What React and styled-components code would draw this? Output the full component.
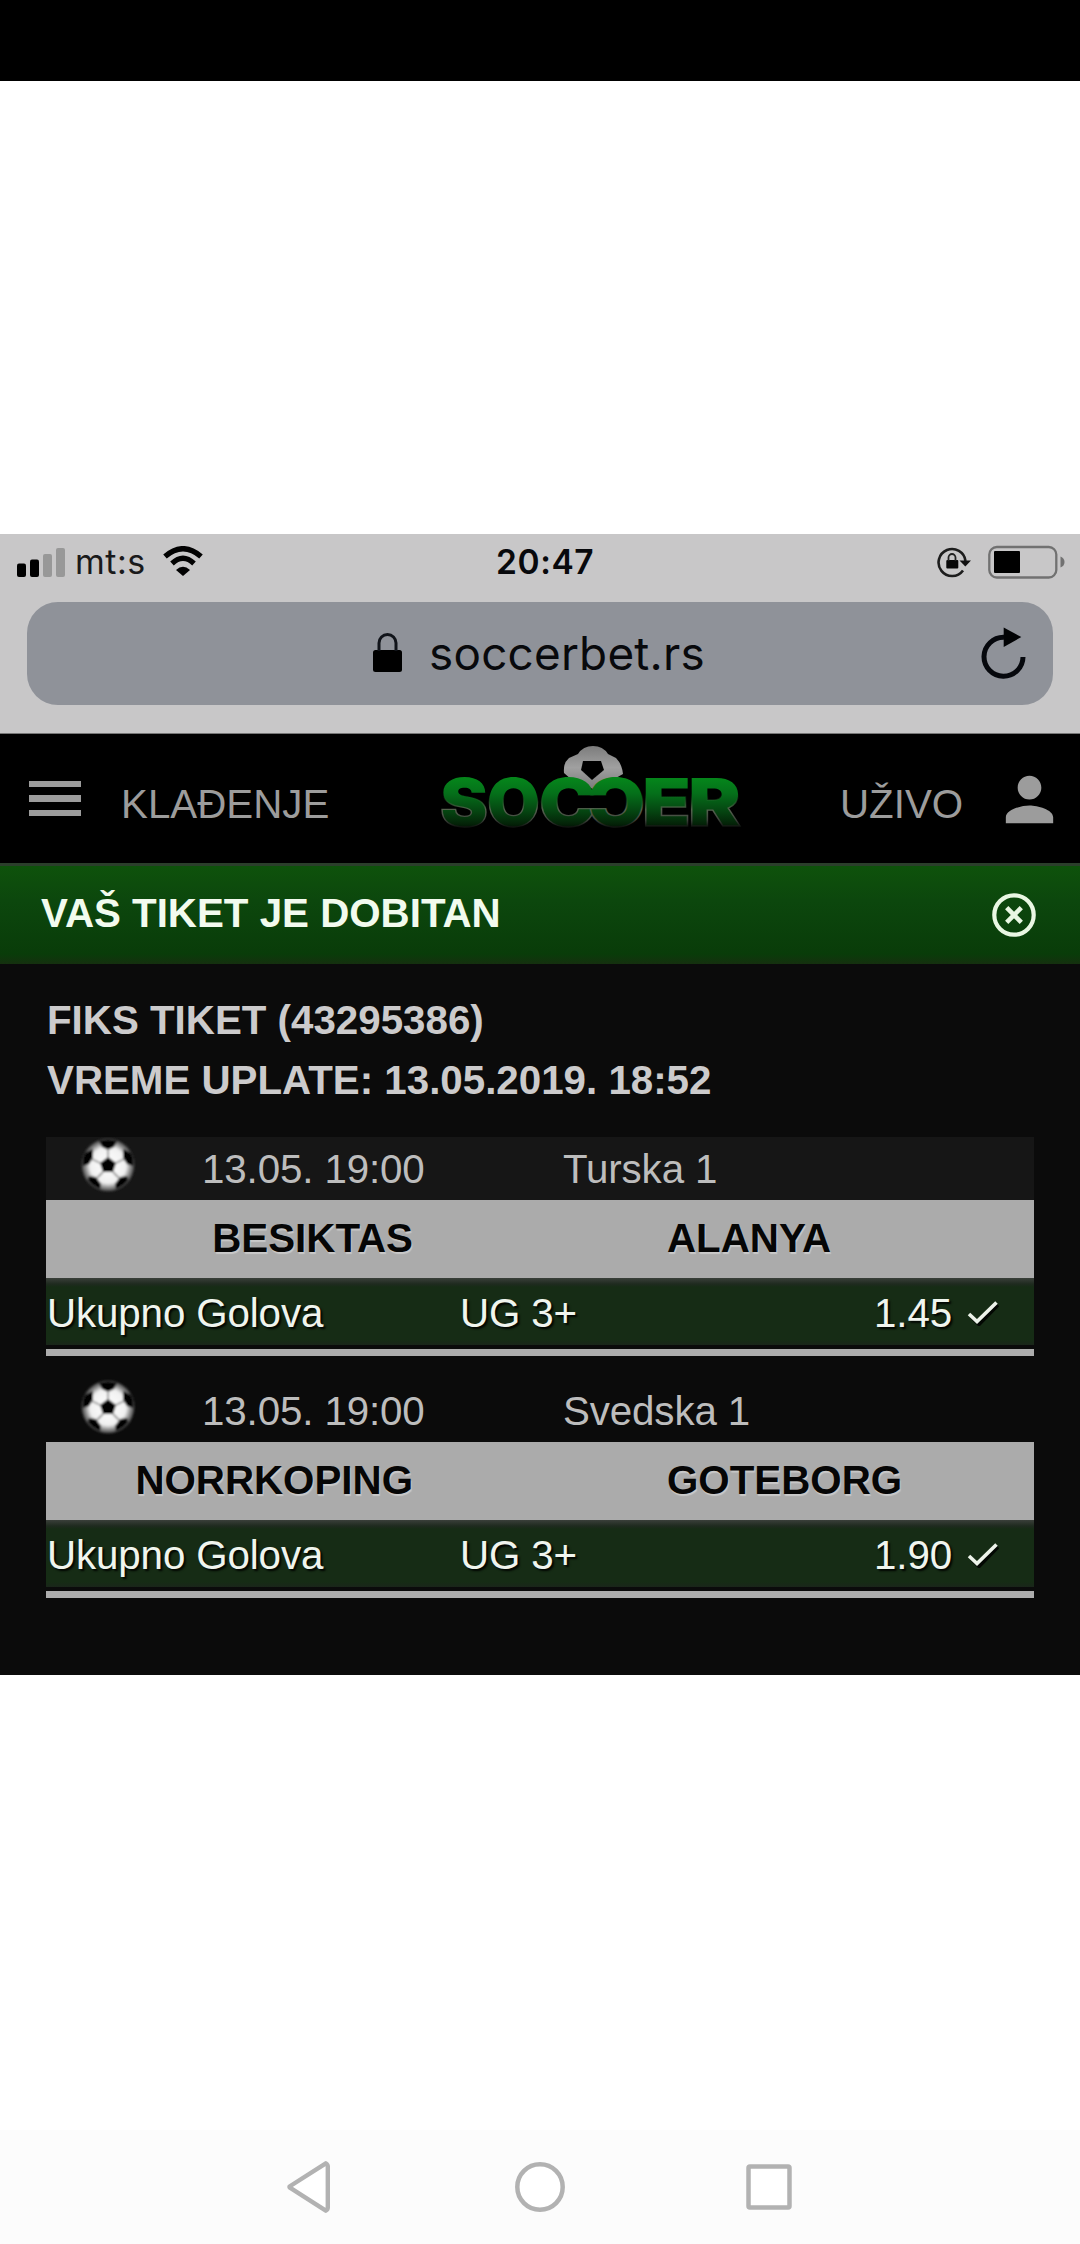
import React from "react";
import styled, { createGlobalStyle } from "styled-components";

const Global = createGlobalStyle`
  html, body { margin: 0; padding: 0; background: #fff; }
  svg { display: block; }
`;

const Page = styled.div`
  width: 1080px;
  height: 2244px;
  display: flex;
  flex-direction: column;
  overflow: hidden;
  background: #fff;
  font-family: "Liberation Sans", Arial, sans-serif;
  font-size: 40.3px;
  line-height: 60px;
  white-space: nowrap;
`;
const TopStrip = styled.div`
  height: 81px;
  flex: none;
  background: #000;
`;
const Shot = styled.main`
  margin-top: 453px;
  height: 1140.5px;
  flex: none;
  display: flex;
  flex-direction: column;
  background: #0b0b0b;
`;
const Browser = styled.section`
  height: 199.5px;
  flex: none;
  box-sizing: border-box;
  background: #c8c7c8;
  border-bottom: 1px solid #777;
  font-family: Inter, sans-serif;
  color: #08090c;
`;
const StatusBar = styled.div`
  height: 67.5px;
  box-sizing: border-box;
  padding-bottom: 12px;
  line-height: 54px;
  display: grid;
  grid-template-columns: 75px 88px 333px 436px 1fr;
  align-items: center;
`;
const Carrier = styled.span`
  font-size: 34px;
  letter-spacing: 0.5px;
  color: #1a1a1b;
`;
const Clock = styled.span`
  font-size: 33.5px;
  font-weight: 600;
  letter-spacing: 0.6px;
`;
const IconSlot = styled.div`
  padding-left: ${(p) => p.$left || 0}px;
  padding-top: ${(p) => p.$above || 0}px;
  padding-bottom: ${(p) => p.$bottom || 0}px;
  display: flex;
`;
const Address = styled.div`
  margin: 0 27px;
  height: 103.5px;
  display: grid;
  grid-template-columns: 346px 56px 1fr 79px;
  align-items: center;
  border-radius: 31px;
  background: #8f9299;
`;
const Host = styled.span`
  font-size: 45.8px;
  letter-spacing: 0.25px;
  padding-top: 2px;
`;
const SiteNav = styled.nav`
  height: 129.5px;
  flex: none;
  display: grid;
  grid-template-columns: 29px 92px 319px 400px 154px 1fr;
  background: #000;
  color: #9c9c9c;
`;
const Burger = styled.div`
  grid-column: 2;
  width: 52px;
  padding-top: 47.5px;
  display: flex;
  flex-direction: column;
  gap: 8px;
`;
const Bar = styled.i`
  height: 6.3px;
  background: #9c9c9c;
`;
const NavLink = styled.span`
  padding-top: 41.5px;
`;
const Logo = styled.svg`
  width: 310px;
  height: 100px;
  margin-top: 8px;
`;
const UserSlot = styled.div`
  padding-top: 30px;
`;
const Banner = styled.header`
  height: 100.5px;
  flex: none;
  box-sizing: border-box;
  border-top: 3px solid #2b3f2b;
  padding: 0 43px 0 41px;
  display: flex;
  align-items: center;
  justify-content: space-between;
  background: linear-gradient(#0e520b, #0c470d 35%, #093c09 90%, #15300f);
  color: #f2fbee;
  font-weight: 700;
`;
const BannerTitle = styled.span`
  padding-bottom: 2px;
`;
const Ticket = styled.section`
  padding: 27px 46px 0 46px;
`;
const Info = styled.p`
  margin: 0;
  padding-left: 1px;
  height: 60px;
  font-weight: 700;
  color: #cccbcc;
`;
const Match = styled.article`
  margin-top: ${(p) => p.$top}px;
`;
const MatchHead = styled.div`
  height: 63px;
  display: grid;
  grid-template-columns: 156px 361px 1fr;
  align-items: center;
  background: ${(p) => (p.$shade ? "#161616" : "transparent")};
  color: #bdbdbd;
`;
const Cell = styled.span`
  padding-top: 3px;
  letter-spacing: -0.12px;
`;
const Teams = styled.div`
  height: 78px;
  display: grid;
  grid-template-columns: 367px 254px 1fr;
  align-items: center;
  background: #ababab;
  color: #060606;
  font-weight: 700;
  text-shadow: 1px 2px 1px #c9c9c9;
`;
const Team = styled.span`
  grid-column: ${(p) => (p.$away ? 3 : 1)};
  text-align: ${(p) => (p.$away ? "left" : "right")};
`;
const Bet = styled.div`
  height: 67px;
  box-sizing: border-box;
  padding: 2px 0 0 1px;
  display: grid;
  grid-template-columns: 413px 1fr auto 82px;
  align-items: center;
  background: linear-gradient(#3a3f3a, #1f2a1f 6px, #162c15 9px, #162c15 62px, #1a261a);
  color: #f0f5ee;
  text-shadow: 2px 2px 2px #020602;
`;
const Rule = styled.div`
  height: 6.5px;
  margin-top: 4.5px;
  background: #adadad;
`;
const AndroidNav = styled.footer`
  margin-top: auto;
  height: 114px;
  display: grid;
  grid-template-columns: 425px 230px 1fr;
  align-items: center;
  background: #fcfcfc;
`;

const BallIcon = () => (
  <svg width="56" height="56" viewBox="-28 -28 56 56">
    <defs>
      <radialGradient id="ballShade">
        <stop offset="0" stopColor="#fff" />
        <stop offset="0.68" stopColor="#f0f0f0" />
        <stop offset="0.86" stopColor="#8a8a8a" />
        <stop offset="1" stopColor="#3c3c3c" />
      </radialGradient>
      <filter id="ballSoft"><feGaussianBlur stdDeviation="0.9" /></filter>
    </defs>
    <g filter="url(#ballSoft)">
      <circle r="26.5" fill="url(#ballShade)" />
      <g fill="#050505">
        <path d="M0-8 8-2 5 7H-5L-8-2Z" />
        <path d="M-9-24Q0-27 9-24L6-18 0-15-6-18Z" />
        <path d="M-23-12-15-16-15-7-19-1-25 1Q-26-6-23-12Z" />
        <path d="M23-12 15-16 15-7 19-1 25 1Q26-6 23-12Z" />
        <path d="M-19 11-12 12-7 19-8 24Q-16 21-20 15Z" />
        <path d="M19 11 12 12 7 19 8 24Q16 21 20 15Z" />
      </g>
      <path d="M0-8V-16M8-2 16-6M5 7 11 13M-5 7-11 13M-8-2-16-6" stroke="#9a9a9a" strokeWidth="1.8" />
    </g>
  </svg>
);

const SoccerLogo = () => (
  <Logo viewBox="440 741 310 100">
    <defs>
      <linearGradient id="face" gradientUnits="userSpaceOnUse" x1="0" y1="777" x2="0" y2="828">
        <stop offset="0" stopColor="#05861b" />
        <stop offset="0.3" stopColor="#05701a" />
        <stop offset="0.65" stopColor="#054511" />
        <stop offset="0.9" stopColor="#042308" />
        <stop offset="1" stopColor="#020c03" />
      </linearGradient>
      <linearGradient id="edge" gradientUnits="userSpaceOnUse" x1="0" y1="777" x2="0" y2="828">
        <stop offset="0.3" stopColor="#0a6a18" stopOpacity="0" />
        <stop offset="0.62" stopColor="#55624f" />
        <stop offset="0.82" stopColor="#3e433c" />
        <stop offset="0.95" stopColor="#101510" />
      </linearGradient>
      <linearGradient id="dome" x1="0" y1="0" x2="0" y2="1">
        <stop offset="0" stopColor="#7c7c7c" />
        <stop offset="0.5" stopColor="#a0a0a0" />
        <stop offset="1" stopColor="#7c7c7c" />
      </linearGradient>
      <filter id="domeSoft"><feGaussianBlur stdDeviation="0.6" /></filter>
    </defs>
    <g filter="url(#domeSoft)">
      <path d="M564 772Q563 762 569 757L578 753Q583 745 593 745T608 753L616 757Q622 763 623 773L614 778 593 788 572 779Z" fill="url(#dome)" />
      <path d="M583 760H601L604 769 592 779 581 769Z" fill="#060606" />
    </g>
    <g fontFamily="Inter, sans-serif" fontWeight="900" fontSize="66" fill="url(#face)" stroke="url(#edge)" strokeWidth="1.3">
      <text x="440" y="825" textLength="48" lengthAdjust="spacingAndGlyphs">S</text>
      <text x="487" y="825" textLength="53" lengthAdjust="spacingAndGlyphs">O</text>
      <text x="539" y="825" textLength="57" lengthAdjust="spacingAndGlyphs">C</text>
      <text transform="translate(1184 0) scale(-1 1)" x="539" y="825" textLength="57" lengthAdjust="spacingAndGlyphs">C</text>
      <text x="642" y="825" textLength="49" lengthAdjust="spacingAndGlyphs">E</text>
      <text x="688" y="825" textLength="53" lengthAdjust="spacingAndGlyphs">R</text>
    </g>
  </Logo>
);

const CheckIcon = () => (
  <svg width="32" height="26" viewBox="0 0 32 26">
    <path d="M3.5 16 11 23.500 30 4" transform="translate(1 1)" fill="none" stroke="#030803" strokeWidth="3.500" />
    <path d="M2 14 10 21.500 29.500 2.500" fill="none" stroke="#edf3ea" strokeWidth="3.600" />
  </svg>
);

const matches = [
  { date: "13.05. 19:00", league: "Turska 1", home: "BESIKTAS", away: "ALANYA", odd: "1.45" },
  { date: "13.05. 19:00", league: "Svedska 1", home: "NORRKOPING", away: "GOTEBORG", odd: "1.90" },
];

export default function App() {
  return (
    <Page>
      <Global />
      <TopStrip />
      <Shot>
        <Browser>
          <StatusBar>
            <IconSlot $left={17}>
              <svg width="49" height="30" viewBox="17 546 49 30">
                <rect x="17" y="562.5" width="9" height="13.5" rx="2" fill="#000" />
                <rect x="30" y="558.5" width="9" height="17.5" rx="2" fill="#000" />
                <rect x="43" y="553" width="9" height="23" rx="2" fill="#989898" />
                <rect x="56" y="547" width="9" height="29" rx="2" fill="#989898" />
              </svg>
            </IconSlot>
            <Carrier>mt:s</Carrier>
            <IconSlot $bottom={1}>
              <svg width="40" height="30" viewBox="0 0 40 30" fill="none" stroke="#020202">
                <path d="M2 10.5Q20-5 38 10.5" strokeWidth="5.4" />
                <path d="M9 17.5Q20 7 31 17.5" strokeWidth="5.2" />
                <path d="M13 24Q20 17.500 27 24L20 30Z" fill="#020202" stroke="none" />
              </svg>
            </IconSlot>
            <Clock>20:47</Clock>
            <IconSlot $left={4}>
              <svg width="132" height="36" viewBox="936 544 132 36">
                <path d="M963 570.500A13.500 13.500 0 1 1 965.500 561" fill="none" stroke="#1d1d1d" strokeWidth="2.6" />
                <path d="M959.500 560.500H971L965.300 566.500Z" fill="#111" />
                <rect x="946.300" y="560" width="12" height="8.500" rx="1" fill="#080808" />
                <path d="M948.500 561V557.500a3.500 3.500 0 0 1 7 0V561" fill="none" stroke="#222" strokeWidth="1.800" />
                <rect x="989.300" y="547" width="67" height="30.500" rx="7.500" fill="none" stroke="#717171" strokeWidth="2.300" />
                <rect x="994" y="551" width="26" height="22" rx="1" fill="#000" />
                <path d="M1060.500 556.500Q1064.500 558 1064.500 562T1060.500 567.500Z" fill="#717171" />
              </svg>
            </IconSlot>
          </StatusBar>
          <Address>
            <IconSlot $left={346} />
            <IconSlot>
              <svg width="30" height="40" viewBox="0 0 30 40">
                <rect x="0" y="17" width="29" height="22" rx="2.500" fill="#000" />
                <path d="M6 18V10a8.500 8.500 0 0 1 17 0V18" fill="none" stroke="#11141a" strokeWidth="3" />
              </svg>
            </IconSlot>
            <Host>soccerbet.rs</Host>
            <IconSlot $above={8}>
              <svg width="60" height="60" viewBox="974 627 60 60">
                <path d="M1004 637.300A19.500 19.500 0 1 0 1023 657" fill="none" stroke="#06080d" strokeWidth="5" />
                <path d="M1003.700 627.500 1021.300 637 1003.700 647Z" fill="#020305" />
              </svg>
            </IconSlot>
          </Address>
        </Browser>
        <SiteNav>
          <Burger>
            <Bar />
            <Bar />
            <Bar />
          </Burger>
          <NavLink>KLAĐENJE</NavLink>
          <SoccerLogo />
          <NavLink>UŽIVO</NavLink>
          <UserSlot>
            <svg width="71" height="71" viewBox="0 0 24 24" fill="#9c9c9c">
              <path d="M12 12c2.210 0 4-1.790 4-4s-1.790-4-4-4-4 1.790-4 4 1.790 4 4 4zm0 2c-2.670 0-8 1.340-8 4v2h16v-2c0-2.660-5.330-4-8-4z" />
            </svg>
          </UserSlot>
        </SiteNav>
        <Banner>
          <BannerTitle>VAŠ TIKET JE DOBITAN</BannerTitle>
          <svg width="46" height="46" viewBox="-23 -23 46 46" fill="none" stroke="#e9f7e3">
            <circle r="19.700" strokeWidth="4.200" />
            <path d="M-7.300-7.300 7.300 7.300M7.300-7.300-7.300 7.300" strokeWidth="4.600" />
          </svg>
        </Banner>
        <Ticket>
          <Info>FIKS TIKET (43295386)</Info>
          <Info>VREME UPLATE: 13.05.2019. 18:52</Info>
          {matches.map((m, i) => (
            <Match key={m.home} $top={i ? 23 : 26}>
              <MatchHead $shade={i === 0}>
                <IconSlot $left={33.5} $bottom={7}><BallIcon /></IconSlot>
                <Cell>{m.date}</Cell>
                <Cell>{m.league}</Cell>
              </MatchHead>
              <Teams>
                <Team>{m.home}</Team>
                <Team $away>{m.away}</Team>
              </Teams>
              <Bet>
                <Cell>Ukupno Golova</Cell>
                <Cell>UG 3+</Cell>
                <Cell>{m.odd}</Cell>
                <IconSlot $left={15} $above={2}><CheckIcon /></IconSlot>
              </Bet>
              <Rule />
            </Match>
          ))}
        </Ticket>
      </Shot>
      <AndroidNav>
        <IconSlot $left={286}>
          <svg width="46" height="54" viewBox="286 2160 46 54">
            <path d="M289.500 2187 325.800 2163.800Q327.800 2165 327.800 2167V2208Q327.800 2210 325.800 2211.200L289.500 2187.800Z" transform="translate(0 -.5)" fill="#fff" stroke="#b2b2b2" strokeWidth="4.400" strokeLinejoin="round" />
          </svg>
        </IconSlot>
        <IconSlot $left={90}>
          <svg width="50" height="50" viewBox="-25 -25 50 50">
            <circle r="22.700" fill="#fff" stroke="#b2b2b2" strokeWidth="4.500" />
          </svg>
        </IconSlot>
        <IconSlot $left={91}>
          <svg width="46" height="46" viewBox="0 0 46 46">
            <rect x="2.500" y="2.500" width="41" height="41" rx="1.500" fill="#fff" stroke="#b2b2b2" strokeWidth="4.500" />
          </svg>
        </IconSlot>
      </AndroidNav>
    </Page>
  );
}
